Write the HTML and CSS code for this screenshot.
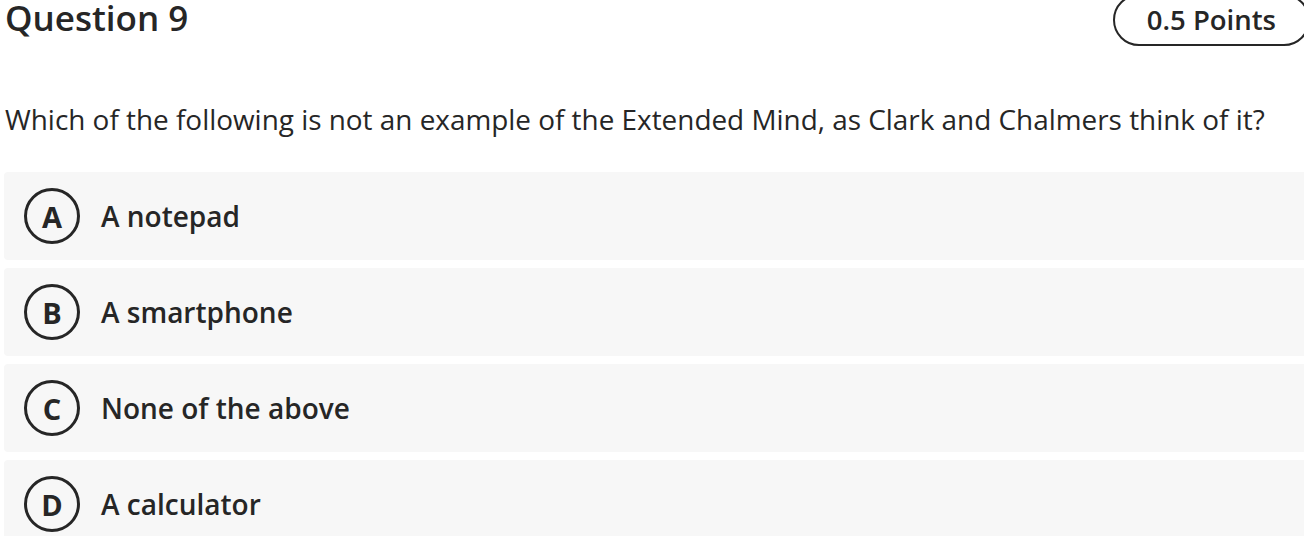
FILE: index.html
```html
<!DOCTYPE html>
<html lang="en">
<head>
  <meta charset="UTF-8">
  <title>Question 9</title>
  <link rel="stylesheet" href="styles.css">
</head>
<body>
  <div class="quiz">
    <div class="quiz-head">
      <h2 class="title">Question 9</h2>
      <span class="points">0.5 Points</span>
    </div>

    <p class="prompt">Which of the following is not an example of the Extended Mind, as Clark and Chalmers think of it?</p>

    <div class="options">
      <div class="option"><span class="letter">A</span><span class="label">A notepad</span></div>
      <div class="option"><span class="letter">B</span><span class="label">A smartphone</span></div>
      <div class="option"><span class="letter">C</span><span class="label">None of the above</span></div>
      <div class="option"><span class="letter">D</span><span class="label">A calculator</span></div>
    </div>
  </div>
</body>
</html>
```

FILE: styles.css
```css
body { margin: 0; overflow: hidden; background: #fff; font-family: "Open Sans", "Liberation Sans", sans-serif; color: #262626; }
.quiz { width: 1306px; padding-left: 4px; }
.quiz-head { display: flex; justify-content: space-between; align-items: flex-start; height: 46px; }
.title { margin: 0; padding-left: 1px; font-size: 35px; font-weight: 600; line-height: 35px; }
.points {
  box-sizing: border-box;
  margin-top: -6px;
  height: 52px;
  padding: 5px 32px 0 32px;
  border: 2px solid #262626;
  border-radius: 26px;
  font-size: 27.5px;
  font-weight: 600;
  line-height: 38px;
}
.prompt { margin: 54px 0 34px 1px; font-size: 27.9px; line-height: 38px; }
.options { display: flex; flex-direction: column; gap: 8px; }
.option {
  display: flex;
  align-items: center;
  gap: 21px;
  height: 88px;
  padding-left: 20px;
  background: #f7f7f7;
  border-radius: 4px;
}
.letter {
  box-sizing: border-box;
  width: 56px;
  height: 56px;
  display: flex;
  align-items: center;
  justify-content: center;
  border: 3px solid #262626;
  border-radius: 50%;
  font-size: 29px;
  font-weight: 700;
}
.label { font-size: 28px; font-weight: 600; }
```
